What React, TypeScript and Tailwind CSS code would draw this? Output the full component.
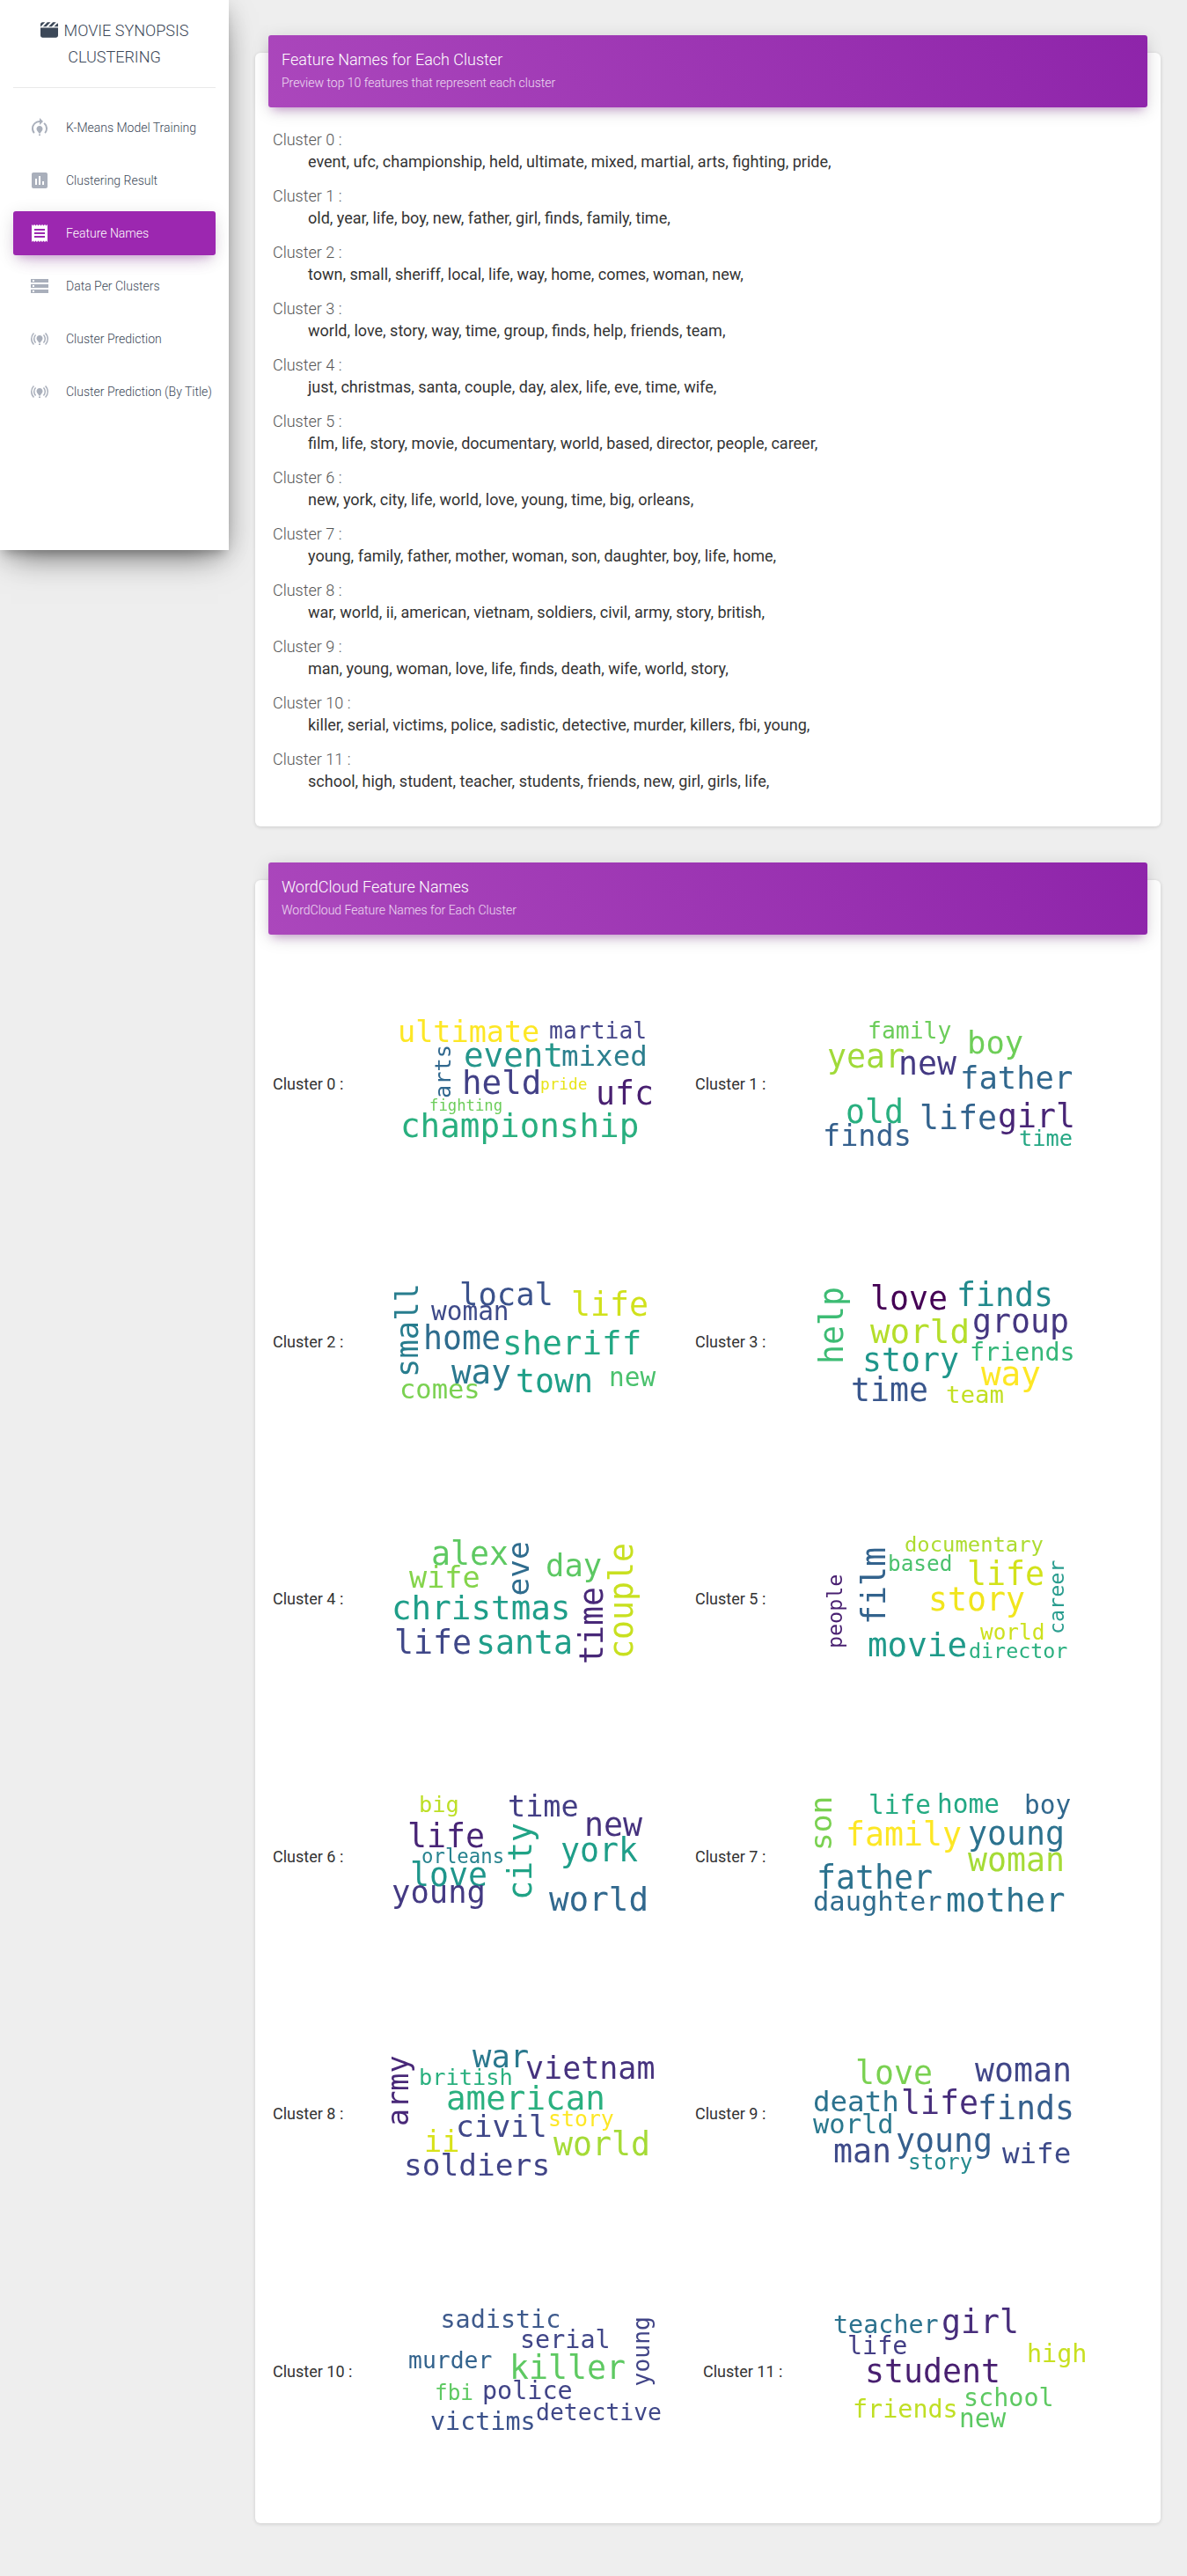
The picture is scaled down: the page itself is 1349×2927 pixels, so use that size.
import { FaClapperboard } from 'react-icons/fa6';
import {
  MdAssessment,
  MdModelTraining,
  MdOnlinePrediction,
  MdReceipt,
  MdStorage,
} from 'react-icons/md';

// text, x, baseline y, font size, colour, vertical
type Word = [string, number, number, number, string, boolean?];

const navItems = [
  { label: 'K-Means Model Training', icon: MdModelTraining },
  { label: 'Clustering Result', icon: MdAssessment },
  { label: 'Feature Names', icon: MdReceipt, active: true },
  { label: 'Data Per Clusters', icon: MdStorage },
  { label: 'Cluster Prediction', icon: MdOnlinePrediction },
  { label: 'Cluster Prediction (By Title)', icon: MdOnlinePrediction },
];

const features = [
  'event, ufc, championship, held, ultimate, mixed, martial, arts, fighting, pride,',
  'old, year, life, boy, new, father, girl, finds, family, time,',
  'town, small, sheriff, local, life, way, home, comes, woman, new,',
  'world, love, story, way, time, group, finds, help, friends, team,',
  'just, christmas, santa, couple, day, alex, life, eve, time, wife,',
  'film, life, story, movie, documentary, world, based, director, people, career,',
  'new, york, city, life, world, love, young, time, big, orleans,',
  'young, family, father, mother, woman, son, daughter, boy, life, home,',
  'war, world, ii, american, vietnam, soldiers, civil, army, story, british,',
  'man, young, woman, love, life, finds, death, wife, world, story,',
  'killer, serial, victims, police, sadistic, detective, murder, killers, fbi, young,',
  'school, high, student, teacher, students, friends, new, girl, girls, life,',
];

const clouds: Word[][] = [
  [
    ['ultimate', 23, 52, 33, '#fde725'],
    ['martial', 195, 48, 26, '#46478a'],
    ['event', 98, 80, 37, '#25968b'],
    ['mixed', 209, 79, 32, '#2c7f8e'],
    ['arts', 82, 115, 25, '#31688e', true],
    ['held', 96, 111, 37, '#424086'],
    ['pride', 185, 106, 17.5, '#e8e419'],
    ['ufc', 248, 123, 36, '#481f70'],
    ['fighting', 59, 130, 17, '#6ccd5a'],
    ['championship', 26, 160, 37, '#29af7f'],
  ],
  [
    ['family', 87, 48, 26, '#6ccd5a'],
    ['boy', 200, 65, 35, '#6ece58'],
    ['year', 41, 81, 36, '#a0da39'],
    ['new', 122, 89, 36, '#443983'],
    ['father', 192, 105, 35, '#31688e'],
    ['old', 62, 144, 36, '#29af7f'],
    ['life', 146, 151, 36, '#33638d'],
    ['girl', 235, 149, 36, '#482576'],
    ['finds', 36, 170, 33, '#35608d'],
    ['time', 259, 170, 25, '#26a784'],
  ],
  [
    ['small', 45, 139, 35, '#287d8e', true],
    ['local', 93, 58, 35, '#3b528b'],
    ['life', 220, 70, 36, '#d0e11c'],
    ['woman', 61, 75, 29, '#3e4a89'],
    ['home', 52, 108, 36, '#2f6c8e'],
    ['sheriff', 142, 114, 37, '#22a884'],
    ['way', 84, 147, 37, '#2a788e'],
    ['town', 157, 157, 36, '#1fa088'],
    ['new', 263, 150, 29, '#4ac16d'],
    ['comes', 25, 164, 30, '#7ad151'],
  ],
  [
    ['help', 58, 124, 36, '#3dbc74', true],
    ['love', 90, 63, 36, '#440154'],
    ['finds', 188, 59, 36, '#238a8d'],
    ['world', 90, 101, 37, '#b5de2b'],
    ['group', 206, 89, 36, '#453781'],
    ['friends', 203, 121, 28, '#35b779'],
    ['story', 81, 133, 36, '#1f968b'],
    ['way', 216, 149, 37, '#fde725'],
    ['time', 68, 167, 36, '#39568c'],
    ['team', 176, 169, 27, '#c2df23'],
  ],
  [
    ['alex', 61, 61, 36, '#5ec962'],
    ['eve', 171, 95.5, 34, '#2f6c8e', true],
    ['day', 191, 74, 35, '#5cc863'],
    ['couple', 289, 167, 36, '#c8e020', true],
    ['wife', 36, 87, 33, '#84d44b'],
    ['christmas', 16, 123, 37, '#1f9e89'],
    ['time', 255, 173, 36, '#482878', true],
    ['life', 19, 162, 36, '#3f4788'],
    ['santa', 112, 162, 36, '#1f9e89'],
  ],
  [
    ['documentary', 129, 45.5, 23.5, '#addc30'],
    ['film', 106, 128, 36, '#33638d', true],
    ['based', 110, 68, 24, '#4ac16d'],
    ['life', 200, 84, 36, '#d2e21b'],
    ['career', 309, 139, 23, '#2a9d8f', true],
    ['people', 57, 155, 23, '#481f70', true],
    ['story', 156, 113, 36, '#f1e51d'],
    ['world', 215, 145.5, 24, '#cde11d'],
    ['movie', 87, 165, 37, '#1f9a8a'],
    ['director', 202, 167, 23, '#29af7f'],
  ],
  [
    ['big', 47, 49, 25, '#bddf26'],
    ['time', 148, 54, 33, '#433e85'],
    ['new', 235, 75.5, 36, '#46327e'],
    ['life', 34, 89, 36, '#482576'],
    ['city', 174, 148, 36, '#20a386', true],
    ['york', 208, 105, 36, '#1f9e89'],
    ['orleans', 50, 107, 22, '#26828e'],
    ['love', 37, 133, 36, '#1f968b'],
    ['young', 16, 152, 35, '#443a83'],
    ['world', 195, 160.5, 37, '#31688e'],
  ],
  [
    ['son', 45, 92, 34, '#7ad151', true],
    ['life', 88, 50.5, 29, '#25ab82'],
    ['home', 166, 50, 29, '#22a884'],
    ['boy', 265, 50.5, 29, '#31688e'],
    ['family', 62, 87, 36, '#fde725'],
    ['young', 201, 86, 36, '#2c728e'],
    ['woman', 201, 115.5, 36, '#a5db36'],
    ['father', 29, 135.5, 36, '#2c728e'],
    ['daughter', 25, 161, 30, '#2f6c8e'],
    ['mother', 176, 162, 37, '#2c728e'],
  ],
  [
    ['army', 34, 113, 33, '#482878', true],
    ['war', 108, 47, 35, '#2a788e'],
    ['vietnam', 168, 60, 34.5, '#46327e'],
    ['british', 47, 67, 25, '#2ab07f'],
    ['american', 78, 95, 37, '#2ab07f'],
    ['civil', 89, 126, 34, '#3f4788'],
    ['story', 194, 114, 24.5, '#fde725'],
    ['ii', 53, 143, 33, '#d8e219'],
    ['world', 200, 147, 36, '#a5db36'],
    ['soldiers', 30, 170, 34, '#414487'],
  ],
  [
    ['love', 73, 66, 36, '#7ad151'],
    ['woman', 209, 63, 36, '#404688'],
    ['death', 25, 97, 32, '#2c728e'],
    ['life', 125, 100, 36, '#472d7b'],
    ['finds', 212, 106, 36, '#35608d'],
    ['world', 25, 122, 30, '#2a788e'],
    ['young', 119, 143, 36, '#355f8d'],
    ['man', 48, 155, 36, '#3e4a89'],
    ['story', 133, 163, 24, '#238a8d'],
    ['wife', 240, 156, 32, '#3e4a89'],
  ],
  [
    ['sadistic', 71.5, 49.5, 28, '#3e5a8c'],
    ['serial', 162, 73, 28, '#404688'],
    ['young', 308, 115.5, 26, '#414487', true],
    ['murder', 35, 96, 26, '#33638d'],
    ['killer', 150, 108, 36, '#5ec962'],
    ['fbi', 65, 132, 24, '#5ec962'],
    ['police', 119, 130.5, 28, '#414487'],
    ['detective', 180, 154.5, 26, '#3f4788'],
    ['victims', 60, 165.5, 28, '#3b528b'],
  ],
  [
    ['teacher', 38, 56, 28, '#2c728e'],
    ['girl', 161, 56, 36, '#472d7b'],
    ['life', 54, 79.5, 28, '#433e85'],
    ['high', 258, 89, 28, '#c8e020'],
    ['student', 74, 112, 36, '#481f70'],
    ['school', 186, 139, 28, '#5ec962'],
    ['friends', 60, 152, 28, '#c0df25'],
    ['new', 181, 163, 29, '#5cc863'],
  ],
];

function WordCloud({ words }: { words: Word[] }) {
  return (
    <svg
      viewBox="0 0 320 200"
      className="w-[320px] h-[200px] shrink-0 overflow-visible blur-[0.35px] font-['DejaVu_Sans_Mono',monospace]"
    >
      {words.map(([text, x, y, size, fill, vertical]) => {
        // sizes were read off glyph edges, the advance is a little wider
        const left = vertical ? x : x - 1;
        const base = vertical ? y + 1 : y;
        return (
          <text
            key={text + x}
            x={left}
            y={base}
            fontSize={size * 1.015}
            fill={fill}
            transform={vertical ? `rotate(-90 ${left} ${base})` : undefined}
          >
            {text}
          </text>
        );
      })}
    </svg>
  );
}

function Sidebar() {
  return (
    <aside className="w-[260px] h-[625px] shrink-0 bg-white shadow-[0_16px_38px_-12px_rgba(0,0,0,0.56),0_4px_25px_0_rgba(0,0,0,0.12),0_8px_10px_-5px_rgba(0,0,0,0.2)]">
      <div className="mx-[15px] h-[100px] pt-5 border-b border-[#e9e9e9] text-center text-lg leading-[30px] font-light text-[#3c4858]">
        <FaClapperboard className="inline-block w-5 h-5 mr-[7px] -mt-1 align-middle" />
        MOVIE SYNOPSIS
        <br />
        CLUSTERING
      </div>
      <nav className="mt-5 mx-[15px] flex flex-col gap-2.5">
        {navItems.map(({ label, icon: Icon, active }) => (
          <a
            key={label}
            className={
              active
                ? 'flex items-center h-[50px] pl-[18px] rounded-[3px] bg-[#9c27b0] text-white text-sm font-light shadow-[0_12px_20px_-10px_rgba(156,39,176,0.28),0_4px_20px_0_rgba(0,0,0,0.12),0_7px_8px_-5px_rgba(156,39,176,0.2)]'
                : 'flex items-center h-[50px] pl-[18px] rounded-[3px] text-[#3c4858] font-light text-sm'
            }
          >
            <Icon className={active ? 'w-6 h-6 mr-[18px] shrink-0' : 'w-6 h-6 mr-[18px] shrink-0 text-[#a9afbb]'} />
            <span className="whitespace-nowrap">{label}</span>
          </a>
        ))}
      </nav>
    </aside>
  );
}

function CardHeader({ title, subtitle }: { title: string; subtitle: string }) {
  return (
    <div className="-mt-5 mx-[15px] h-[82px] px-[15px] pt-[15px] rounded-[3px] bg-[linear-gradient(60deg,#ab47bc,#8e24aa)] text-white shadow-[0_4px_20px_0_rgba(0,0,0,0.14),0_7px_10px_-5px_rgba(156,39,176,0.4)]">
      <h4 className="text-lg font-light leading-[25px]">{title}</h4>
      <p className="mt-1 text-sm font-light leading-5 text-white/80">{subtitle}</p>
    </div>
  );
}

export default function App() {
  return (
    <div className="flex min-h-[2927px] bg-[#eeeeee] font-['Roboto',sans-serif]">
      <Sidebar />
      <main className="flex-1 px-[30px] pt-[60px]">
        <section className="flow-root h-[879px] rounded-md bg-white shadow-[0_1px_4px_0_rgba(0,0,0,0.14)]">
          <CardHeader title="Feature Names for Each Cluster" subtitle="Preview top 10 features that represent each cluster" />
          <div className="mt-6 px-5 flex flex-col gap-[14px]">
            {features.map((text, i) => (
              <div key={i} className="text-lg leading-[25px]">
                <div className="font-light text-[#555555]">Cluster {i} :</div>
                <div className="pl-10 text-[#333333]">{text}</div>
              </div>
            ))}
          </div>
        </section>
        <section className="flow-root mt-[61px] h-[1867px] rounded-md bg-white shadow-[0_1px_4px_0_rgba(0,0,0,0.14)]">
          <CardHeader title="WordCloud Feature Names" subtitle="WordCloud Feature Names for Each Cluster" />
          <div className="mt-6 px-5">
            {[0, 2, 4, 6, 8, 10].map((i) => (
              <div key={i} className="flex h-[292.5px] items-center text-lg text-[#333333]">
                <div className={i === 10 ? 'flex w-[489px] items-center' : 'flex w-[480px] items-center'}>
                  <span className="w-[120px] shrink-0">Cluster {i} :</span>
                  <WordCloud words={clouds[i]} />
                </div>
                <div className="flex items-center">
                  <span className={i === 10 ? 'w-[111px] shrink-0' : 'w-[110px] shrink-0'}>Cluster {i + 1} :</span>
                  <WordCloud words={clouds[i + 1]} />
                </div>
              </div>
            ))}
          </div>
        </section>
      </main>
    </div>
  );
}
